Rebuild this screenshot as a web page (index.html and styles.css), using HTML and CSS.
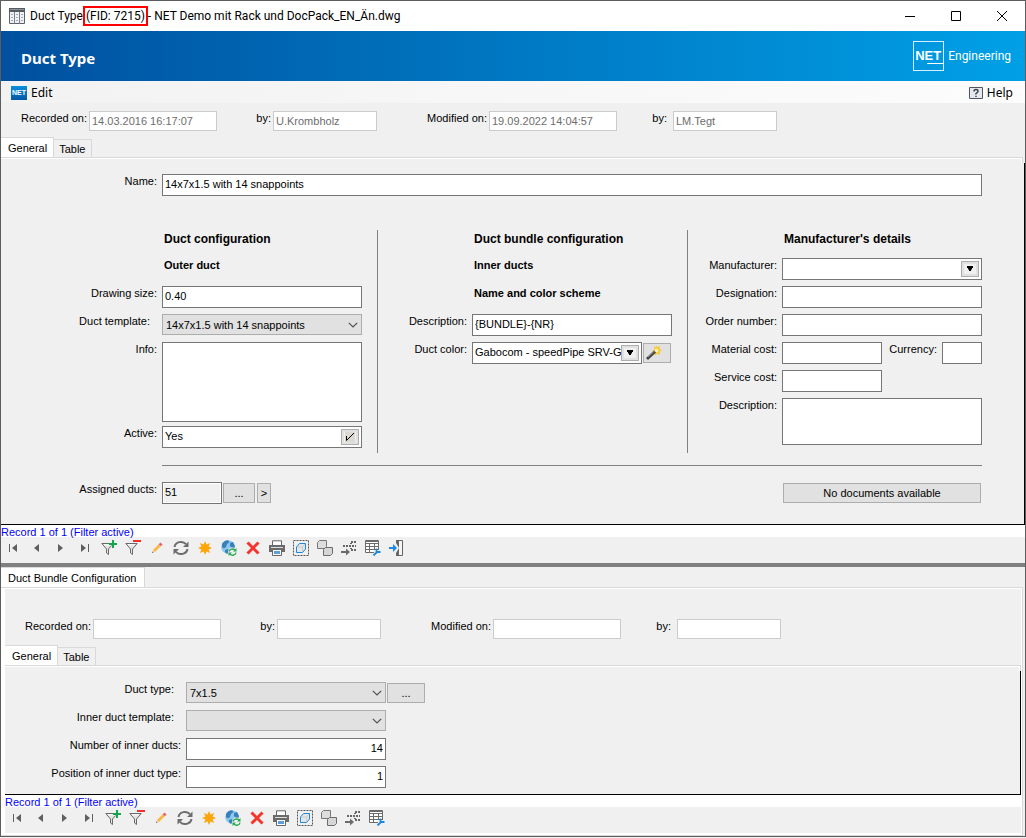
FILE: index.html
```html
<!DOCTYPE html>
<html lang="en">
<head>
<meta charset="utf-8">
<title>Duct Type</title>
<link rel="stylesheet" href="styles.css">
</head>
<body>
<svg class="sprite" aria-hidden="true">
  <symbol id="i-first" viewBox="0 0 16 16"><path d="M4.5 4v8" stroke="#5f5f5f" fill="none"/><path d="M12 4v8L7 8z" fill="#5f5f5f"/></symbol>
  <symbol id="i-prev" viewBox="0 0 16 16"><path d="M10 4v8L5 8z" fill="#5f5f5f"/></symbol>
  <symbol id="i-next" viewBox="0 0 16 16"><path d="M5 4v8l5-4z" fill="#5f5f5f"/></symbol>
  <symbol id="i-last" viewBox="0 0 16 16"><path d="M4 4v8l5-4z" fill="#5f5f5f"/><path d="M11.5 4v8" stroke="#5f5f5f" fill="none"/></symbol>
  <symbol id="i-funnel" viewBox="0 0 16 16"><path d="M.8 3.5h11.4L7.5 9v5.5l-2-1.5V9z" fill="#e4e4e4" stroke="#6a6a6a" stroke-linejoin="round"/><path d="M3 4.8h6.5" stroke="#fff"/></symbol>
  <symbol id="i-filter-add" viewBox="0 0 16 16"><use href="#i-funnel"/><path d="M12.5 0v8M8.500 4h8" stroke="#f0f0f0" stroke-width="3"/><path d="M12 0v8M8 4h8" stroke="#10a64a" stroke-width="2"/></symbol>
  <symbol id="i-filter-del" viewBox="0 0 16 16"><use href="#i-funnel"/><path d="M8 1h8" stroke="#f0302c" stroke-width="2"/></symbol>
  <symbol id="i-pencil" viewBox="0 0 16 16"><path d="M5 11l6-6" stroke="#fbb84a" stroke-width="3"/><path d="M10.800 5.200l1.700-1.700" stroke="#e8606a" stroke-width="3"/><path d="M3 13l1-3 2 2z" fill="#e6cfa8"/><path d="M3 13l.5-1.500 1 1z" fill="#555"/></symbol>
  <symbol id="i-sync" viewBox="0 0 16 16"><path d="M1.500 7A6.500 6 0 0 1 13 4.200M14.500 9A6.500 6 0 0 1 3 11.800" fill="none" stroke="#6c6c6c" stroke-width="2"/><path d="M15.500 1.500V7H10zM.5 14.500V9H6z" fill="#6c6c6c"/></symbol>
  <symbol id="i-new" viewBox="0 0 16 16"><path d="M8 1l1.500 3.400 3.600-1.500-1.500 3.600L15 8l-3.400 1.500 1.500 3.600-3.600-1.500L8 15l-1.500-3.400-3.600 1.500 1.500-3.600L1 8l3.400-1.500-1.500-3.600 3.600 1.500z" fill="#fca60c"/></symbol>
  <symbol id="i-globe" viewBox="0 0 16 16"><circle cx="7" cy="7" r="6.800" fill="#8cc8f0"/><path d="M1 4Q3 .5 7 .3L8.500 2 6 4 5 7 3 8.500 1 7zM9 3l3-1 2 4-1 3-2-1-2-2zM4 10l3-1 1 2-2 3-2-2z" fill="#3a80b8"/><circle cx="11.500" cy="12" r="4.500" fill="#f0f0f0"/><path d="M8 11.500a3.500 3 0 0 1 6-1.500M15 12.500a3.500 3 0 0 1-6 1.800" fill="none" stroke="#23a84f" stroke-width="1.300"/><path d="M15.500 8v3.500H12zM7.500 16v-3.500H11z" fill="#23a84f"/></symbol>
  <symbol id="i-delete" viewBox="0 0 16 16"><path d="M2.500 2.500l11 11M13.500 2.500l-11 11" stroke="#f5352d" stroke-width="3"/></symbol>
  <symbol id="i-print" viewBox="0 0 16 16"><path d="M3.500 5V.8h9V5" fill="#fff" stroke="#666"/><path d="M0 5h16v7H0z" fill="#6b6b6b"/><path d="M2 7.500h12" stroke="#ddd"/><path d="M3.500 9.500h9v6h-9z" fill="#fff" stroke="#666"/><path d="M5 11h6v3H5z" fill="#5a9edb"/></symbol>
  <symbol id="i-select" viewBox="0 0 16 16"><path d="M.5.5h15v15H.5z" fill="none" stroke="#555" stroke-dasharray="2 1"/><path d="M3.500 7l3-3.500H12.500V9l-3 3.500H3.500z" fill="#e6e6e6" stroke="#1e88dc" stroke-linejoin="round"/><path d="M4 7h5.500v5M9.500 7L12 4" fill="none" stroke="#ccc"/></symbol>
  <symbol id="i-copy" viewBox="0 0 16 16"><path d="M.5 2.500l2-2h7v6l-2 2h-7z" fill="#ddd" stroke="#777" stroke-linejoin="round"/><path d="M6.500 9.500l2-2h7v6l-2 2h-7z" fill="#d6d6d6" stroke="#6c6c6c" stroke-linejoin="round"/></symbol>
  <symbol id="i-tree" viewBox="0 0 16 16"><path d="M0 12h5" stroke="#6b6b6b" stroke-width="2"/><path d="M5 8.500v7L9 12z" fill="#6b6b6b"/><path d="M2 5h2v2H2zM5 5h2v2H5zM8 5h2v2H8zM9 3h2v1H9zM10 1h2v2h-2zM13 1h2v2h-2zM11 5h2v2h-2zM14 5h1v2h-1zM9 8h2v1H9zM10 9h2v2h-2zM13 9h2v2h-2z" fill="#666"/></symbol>
  <symbol id="i-table" viewBox="0 0 16 16"><path d="M.5.5h13v12H.5z" fill="#fff" stroke="#6b6b6b"/><path d="M0 1.500h14M0 3.500h14M0 6.500h14M0 9.500h14M4.500 3v10M9.500 3v10" stroke="#6b6b6b" fill="none"/><path d="M9 10h6v4H9z" fill="#f0f0f0"/><path d="M8.500 15.500l4-4M11.500 8.500v3.500h4" stroke="#2086dd" stroke-width="1.800" fill="none"/></symbol>
  <symbol id="i-exit" viewBox="0 0 16 16"><path d="M7.500.5h6v15h-6z" fill="#f4f4f4" stroke="#666"/><path d="M7 0h3v16H7z" fill="#666"/><path d="M3 3h4l3 5-3 5H3z" fill="#f0f0f0"/><path d="M0 8h6" stroke="#1e88e5" stroke-width="2"/><path d="M4 4l4 4-4 4z" fill="#1e88e5"/></symbol>
  <symbol id="i-chevron" viewBox="0 0 10 6"><path d="M.8.800L5 5 9.200.800" fill="none" stroke="#505050" stroke-width="1.200"/></symbol>
  <symbol id="i-drop" viewBox="0 0 8 6"><path d="M1 0h6v2H6v1.500H5V5H3V3.500H2V2H1z" fill="#000"/></symbol>
</svg>

<div class="window">
  <header class="titlebar">
    <svg class="titlebar-icon" viewBox="0 0 16 16"><path d="M.5.5h15v15H.5z" fill="#eef0f3" stroke="#5c6068"/><path d="M0 0h16v4H0z" fill="#555a63"/><path d="M1 1.500h14" stroke="#8b909a"/><path d="M5.500 4v12M10.500 4v12" stroke="#7b8089"/><path d="M2 6.500h2M2 9.500h2M2 12.500h2M7 6.500h2M7 9.500h2M7 12.500h2M12 6.500h2M12 9.500h2M12 12.500h2" stroke="#a5abb5"/></svg>
    <h1 class="titlebar-text">Duct Type <span class="fid">(FID: 7215)</span> - NET Demo mit Rack und DocPack_EN_Än.dwg</h1>
    <div class="caption-buttons">
      <button type="button" aria-label="Minimize"><svg viewBox="0 0 10 10"><path d="M0 5.500h10"/></svg></button>
      <button type="button" aria-label="Maximize"><svg viewBox="0 0 10 10"><path d="M.5.5h9v9h-9z"/></svg></button>
      <button type="button" aria-label="Close"><svg viewBox="0 0 10 10"><path d="M0 0l10 10M10 0L0 10"/></svg></button>
    </div>
  </header>

  <div class="banner">
    <h2 class="banner-title">Duct Type</h2>
    <div class="brand"><span class="brand-box"><span class="brand-net">NET</span></span><span class="brand-name">Engineering</span></div>
  </div>

  <nav class="menubar">
    <button type="button" class="menu"><span class="menu-net">NET</span>Edit</button>
    <button type="button" class="menu"><svg class="help-icon" viewBox="0 0 14 12"><path d="M.5.5h13v11H.5z" fill="#e6e8ec" stroke="#4d5561"/><path d="M5 4.500q0-2 2-2t2 1.700q0 1-1.200 1.600T7 7.500M7 8.700v1.300" fill="none" stroke="#3b434f" stroke-width="1.500"/></svg>Help</button>
  </nav>

  <main class="section">
    <div class="meta">
      <label for="rec">Recorded on:</label><input id="rec" value="14.03.2016 16:17:07" disabled>
      <label for="rec-by">by:</label><input id="rec-by" value="U.Krombholz" disabled>
      <label for="mod">Modified on:</label><input id="mod" value="19.09.2022 14:04:57" disabled>
      <label for="mod-by">by:</label><input id="mod-by" value="LM.Tegt" disabled>
    </div>
    <div class="tabs"><button type="button" class="tab tab-active">General</button><button type="button" class="tab">Table</button></div>
    <div class="tab-edge"></div>
    <div class="form form-main">
      <div class="row"><label class="label" for="name">Name:</label><input class="field field-grow" id="name" value="14x7x1.5 with 14 snappoints"></div>
      <div class="columns">
        <section class="column">
          <h3 class="head">Duct configuration</h3>
          <h4 class="subhead">Outer duct</h4>
          <div class="row"><label class="label" for="size">Drawing size:</label><input class="field" id="size" value="0.40"></div>
          <div class="row"><label class="label label-select" for="tpl">Duct template:</label><span class="select"><select id="tpl"><option>14x7x1.5 with 14 snappoints</option></select><svg><use href="#i-chevron"/></svg></span></div>
          <div class="row row-info"><label class="label" for="info">Info:</label><textarea class="field" id="info"></textarea></div>
          <div class="row"><label class="label" for="active">Active:</label><span class="field combo"><input id="active" value="Yes"><button type="button" class="mini" aria-label="Toggle active"><svg viewBox="0 0 10 10"><path d="M0 0h10v10H0z" fill="#dcd8d2"/><path d="M1.500 4v4.500L9 1" fill="none" stroke="#000"/></svg></button></span></div>
        </section>
        <section class="column column-mid">
          <h3 class="head">Duct bundle configuration</h3>
          <h4 class="subhead">Inner ducts</h4>
          <h4 class="subhead">Name and color scheme</h4>
          <div class="row"><label class="label" for="desc">Description:</label><input class="field" id="desc" value="{BUNDLE}-{NR}"></div>
          <div class="row"><label class="label" for="color">Duct color:</label><span class="field combo combo-short"><input id="color" value="Gabocom - speedPipe SRV-G 7x1.5"><button type="button" class="mini" aria-label="Choose duct color"><svg class="drop"><use href="#i-drop"/></svg></button></span><button type="button" class="button wand" aria-label="Color assistant"><svg viewBox="0 0 16 16"><path d="M10 0l1.200 2.500L14 1l-.5 3L16 5.500l-2.500 1L14 10l-2.500-1.500L9 10.500 8.500 7.500 6 6l2.500-1.200L8 1.500l2 1z" fill="#f9c623"/><circle cx="10.500" cy="5.500" r="2" fill="#fff2a8"/><path d="M1 14l8-7.500" stroke="#444" stroke-width="3"/><path d="M2 12l7-6.500" stroke="#999"/></svg></button></div>
        </section>
        <section class="column column-end">
          <h3 class="head">Manufacturer's details</h3>
          <div class="row"><label class="label" for="manu">Manufacturer:</label><span class="field combo"><input id="manu"><button type="button" class="mini" aria-label="Choose manufacturer"><svg class="drop"><use href="#i-drop"/></svg></button></span></div>
          <div class="row"><label class="label" for="desig">Designation:</label><input class="field" id="desig"></div>
          <div class="row"><label class="label" for="order">Order number:</label><input class="field" id="order"></div>
          <div class="row"><label class="label" for="mat">Material cost:</label><input class="field field-half" id="mat"><label class="label label-inline" for="cur">Currency:</label><input class="field field-small" id="cur"></div>
          <div class="row"><label class="label" for="serv">Service cost:</label><input class="field field-half" id="serv"></div>
          <div class="row"><label class="label" for="mdesc">Description:</label><textarea class="field" id="mdesc"></textarea></div>
        </section>
      </div>
      <hr class="rule">
      <div class="row">
        <label class="label" for="assigned">Assigned ducts:</label><input class="field field-count" id="assigned" value="51" readonly>
        <button type="button" class="button button-dots">...</button><button type="button" class="button button-next">&gt;</button>
        <button type="button" class="button button-docs">No documents available</button>
      </div>
    </div>
    <div class="record">Record 1 of 1 (Filter active)</div>
    <div class="toolbar">
      <button type="button" aria-label="First"><svg><use href="#i-first"/></svg></button>
      <button type="button" aria-label="Previous"><svg><use href="#i-prev"/></svg></button>
      <button type="button" aria-label="Next"><svg><use href="#i-next"/></svg></button>
      <button type="button" aria-label="Last"><svg><use href="#i-last"/></svg></button>
      <button type="button" aria-label="Set filter"><svg><use href="#i-filter-add"/></svg></button>
      <button type="button" aria-label="Remove filter"><svg><use href="#i-filter-del"/></svg></button>
      <button type="button" aria-label="Edit"><svg><use href="#i-pencil"/></svg></button>
      <button type="button" aria-label="Refresh"><svg><use href="#i-sync"/></svg></button>
      <button type="button" aria-label="New"><svg><use href="#i-new"/></svg></button>
      <button type="button" aria-label="Update graphics"><svg><use href="#i-globe"/></svg></button>
      <button type="button" aria-label="Delete"><svg><use href="#i-delete"/></svg></button>
      <button type="button" aria-label="Print"><svg><use href="#i-print"/></svg></button>
      <button type="button" aria-label="Select feature"><svg><use href="#i-select"/></svg></button>
      <button type="button" aria-label="Copy"><svg><use href="#i-copy"/></svg></button>
      <button type="button" aria-label="Trace"><svg><use href="#i-tree"/></svg></button>
      <button type="button" aria-label="Table settings"><svg><use href="#i-table"/></svg></button>
      <button type="button" aria-label="Close form"><svg><use href="#i-exit"/></svg></button>
    </div>
  </main>

  <div class="splitter"></div>

  <div class="tabs tabs-outer"><button type="button" class="tab tab-active">Duct Bundle Configuration</button></div>
  <section class="section subpanel">
    <div class="meta">
      <label for="rec2">Recorded on:</label><input id="rec2" disabled>
      <label for="rec2-by">by:</label><input id="rec2-by" disabled>
      <label for="mod2">Modified on:</label><input id="mod2" disabled>
      <label for="mod2-by">by:</label><input id="mod2-by" disabled>
    </div>
    <div class="tabs"><button type="button" class="tab tab-active">General</button><button type="button" class="tab">Table</button></div>
    <div class="tab-edge"></div>
    <div class="form form-sub">
      <div class="row"><label class="label label-select" for="type">Duct type:</label><span class="select"><select id="type"><option>7x1.5</option></select><svg><use href="#i-chevron"/></svg></span><button type="button" class="button button-wide">...</button></div>
      <div class="row"><label class="label label-select" for="itpl">Inner duct template:</label><span class="select"><select id="itpl"><option></option></select><svg><use href="#i-chevron"/></svg></span></div>
      <div class="row"><label class="label" for="num">Number of inner ducts:</label><input class="field field-num" id="num" value="14"></div>
      <div class="row"><label class="label" for="pos">Position of inner duct type:</label><input class="field field-num" id="pos" value="1"></div>
    </div>
    <div class="record">Record 1 of 1 (Filter active)</div>
    <div class="toolbar">
      <button type="button" aria-label="First"><svg><use href="#i-first"/></svg></button>
      <button type="button" aria-label="Previous"><svg><use href="#i-prev"/></svg></button>
      <button type="button" aria-label="Next"><svg><use href="#i-next"/></svg></button>
      <button type="button" aria-label="Last"><svg><use href="#i-last"/></svg></button>
      <button type="button" aria-label="Set filter"><svg><use href="#i-filter-add"/></svg></button>
      <button type="button" aria-label="Remove filter"><svg><use href="#i-filter-del"/></svg></button>
      <button type="button" aria-label="Edit"><svg><use href="#i-pencil"/></svg></button>
      <button type="button" aria-label="Refresh"><svg><use href="#i-sync"/></svg></button>
      <button type="button" aria-label="New"><svg><use href="#i-new"/></svg></button>
      <button type="button" aria-label="Update graphics"><svg><use href="#i-globe"/></svg></button>
      <button type="button" aria-label="Delete"><svg><use href="#i-delete"/></svg></button>
      <button type="button" aria-label="Print"><svg><use href="#i-print"/></svg></button>
      <button type="button" aria-label="Select feature"><svg><use href="#i-select"/></svg></button>
      <button type="button" aria-label="Copy"><svg><use href="#i-copy"/></svg></button>
      <button type="button" aria-label="Trace"><svg><use href="#i-tree"/></svg></button>
      <button type="button" aria-label="Table settings"><svg><use href="#i-table"/></svg></button>
    </div>
  </section>
</div>
</body>
</html>
```

FILE: styles.css
```css
* { box-sizing: border-box; }

body {
  margin: 0;
  background: #f0f0f0;
  color: #000;
  font: 11px/14px "Liberation Sans", Arial, sans-serif;
}

h1, h2, h3, h4 { margin: 0; font-size: 11px; }
button, input, select, textarea { font: inherit; color: inherit; margin: 0; border-radius: 0; }
button { padding: 0; border: 0; background: none; }
svg { display: block; }
.sprite { position: absolute; width: 0; height: 0; }

.window { border: 1px solid #5d5d5f; min-width: 1000px; }

/* Title bar */
.titlebar { display: flex; align-items: center; height: 30px; padding-left: 8px; background: #fff; }
.titlebar-icon { width: 16px; height: 16px; }
.titlebar-text { flex: 1; padding-left: 5px; font: 400 12px/16px Roboto, sans-serif; white-space: nowrap; }
.fid { outline: 2px solid #f00; outline-offset: 1px; }
.caption-buttons { display: flex; }
.caption-buttons button { display: grid; place-items: center; width: 46px; height: 30px; }
.caption-buttons svg { width: 10px; height: 10px; fill: none; stroke: #000; overflow: visible; }

/* Banner */
.banner { display: flex; align-items: center; justify-content: space-between; height: 50px; padding: 0 14px 0 20px; background: linear-gradient(90deg, #00509f, #00a0e6); color: #fff; }
.banner-title { padding-top: 4px; font: 700 15px/20px "Noto Sans", sans-serif; }
.brand { display: flex; align-items: center; gap: 4px; font: 12px/14px Roboto, sans-serif; }
.brand-box { display: flex; align-items: center; width: 31px; height: 30px; padding-left: 1px; border: 1px solid #d5efff; }
.brand-net { position: relative; font: 700 13px/14px "Liberation Sans", sans-serif; }
.brand-net::after { content: ""; position: absolute; right: -2px; bottom: -1px; width: 16px; height: 1px; background: #fff; }

/* Menu bar */
.menubar { display: flex; justify-content: space-between; height: 22px; padding: 2px 12px 0 10px; background: linear-gradient(90deg, #f2f2f2, #fcfcfc); }
.menu { display: flex; align-items: center; gap: 4px; font: 12px/16px "Noto Sans", sans-serif; }
.menu-net { width: 16px; height: 14px; background: linear-gradient(#0a8fdc, #0558a5); color: #fff; font: 700 7px/14px "Liberation Sans", sans-serif; }
.help-icon { width: 14px; height: 12px; }

/* Recorded / modified line */
.meta { display: grid; grid-template-columns: 68px 128px 56px 104px 112px 128px 56px 104px; padding: 8px 0 6px 20px; white-space: nowrap; }
.meta label { text-align: right; padding-right: 2px; }
.meta label:nth-of-type(1) { text-align: left; padding: 0; }
.meta label:nth-of-type(4) { padding-right: 6px; }
.meta input { height: 20px; min-width: 0; padding: 0 2px; border: 1px solid #ccc; background: #fff; color: #6d6d6d; }

/* Tabs */
.tabs { display: flex; align-items: flex-end; height: 20px; }
.tab { height: 18px; padding: 1px 6px 0 5px; border: 1px solid #d9d9d9; border-width: 1px 1px 0 0; }
.tab-active { height: 20px; padding: 0 6px 0 7px; background: #fff; }
.tab-edge { height: 6px; border: solid #d9d9d9; border-width: 1px 1px 0 0; box-shadow: inset -1px 1px #fff; margin-right: 2px; }

/* Forms */
.form { border: solid #000; border-width: 0 1px 1px 0; }
.form-main { --label: 161px; padding: 11px 0 20px; }
.form-sub { --label: 181px; display: flex; flex-direction: column; gap: 6px; padding: 11px 0 6px; }
.row { display: flex; align-items: flex-start; min-height: 22px; }
.form-main > .row { padding-right: 42px; }
.label { flex: none; width: var(--label); padding-right: 5px; text-align: right; white-space: nowrap; }
.label-select { padding-right: 12px; }
.label-inline { width: 60px; }

.field { flex: none; width: 200px; height: 22px; padding: 0 2px 2px; border: 1px solid #767676; background: #fff; }
.field-grow { flex: 1; }
.field-half { width: 100px; }
.field-small { width: 40px; }
.field-count { width: 60px; background: #f0f0f0; box-shadow: inset 0 0 0 1px #fff; }
.field-num { text-align: right; }
textarea.field { height: 47px; resize: none; display: block; }
#info { height: 80px; }
.row-info { height: 78px; }

.combo { display: flex; padding: 2px; }
.combo-short { width: 170px; }
.combo input { flex: 1; min-width: 0; padding: 0 0 2px; border: 0; background: none; }
.mini { display: grid; place-items: center; width: 18px; height: 16px; border: 1px solid #adadad; background: #f0f0f0; box-shadow: inset 0 0 0 2px #e1e1e1; }
.mini svg { width: 10px; height: 10px; }
.mini .drop { width: 8px; height: 6px; }

.select { position: relative; flex: none; width: 200px; }
.select select { display: block; width: 100%; height: 21px; padding: 0 20px 0 3px; border: 1px solid #adadad; background: #e1e1e1; appearance: none; }
.select svg { position: absolute; right: 4px; top: 8px; width: 10px; height: 6px; pointer-events: none; }

.button { height: 20px; border: 1px solid #adadad; background: #e1e1e1; margin: 1px 0 0 2px; }
.wand { width: 28px; margin-left: 1px; }
.wand svg { width: 16px; height: 16px; margin-left: 2px; }
.button-dots { width: 32px; margin-left: 1px; }
.button-next { width: 14px; }
.button-wide { width: 38px; margin-left: 1px; }
.button-docs { width: 198px; margin: 1px 1px 0 auto; }

.columns { display: grid; grid-template-columns: 377fr 310fr 336fr; padding-top: 34px; }
.column { display: flex; flex-direction: column; gap: 6px; padding-bottom: 5px; border-right: 1px solid #808080; }
.column-mid { --label: 94px; }
.column-end { --label: 94px; border: 0; }
.head, .subhead { height: 22px; padding-left: calc(var(--label) + 2px); white-space: nowrap; font-weight: 700; }
.head { font-size: 12px; line-height: 18px; }
.rule { margin: 12px 42px 16px var(--label); border: 0; border-top: 1px solid #808080; }

/* Record status and toolbar */
.record { height: 12px; background: #fff; color: #00f; line-height: 14px; }
.toolbar { display: flex; align-items: flex-start; gap: 8px; height: 26px; padding: 3px 0 0 4px; }
.toolbar svg { width: 16px; height: 16px; overflow: visible; }

.splitter { height: 4px; background: #808080; }

/* Lower panel */
.tabs-outer .tab { padding-right: 8px; }
.subpanel { margin-right: 2px; padding: 1px 1px 2px 0; border: solid #d9d9d9; border-width: 1px 1px 1px 0; background: #fff; }
.subpanel > * { margin-left: 4px; }
.subpanel > :not(.record) { background: #f0f0f0; }
.subpanel .tab-edge { margin-right: 0; }
.subpanel .meta { padding-top: 30px; }
```
